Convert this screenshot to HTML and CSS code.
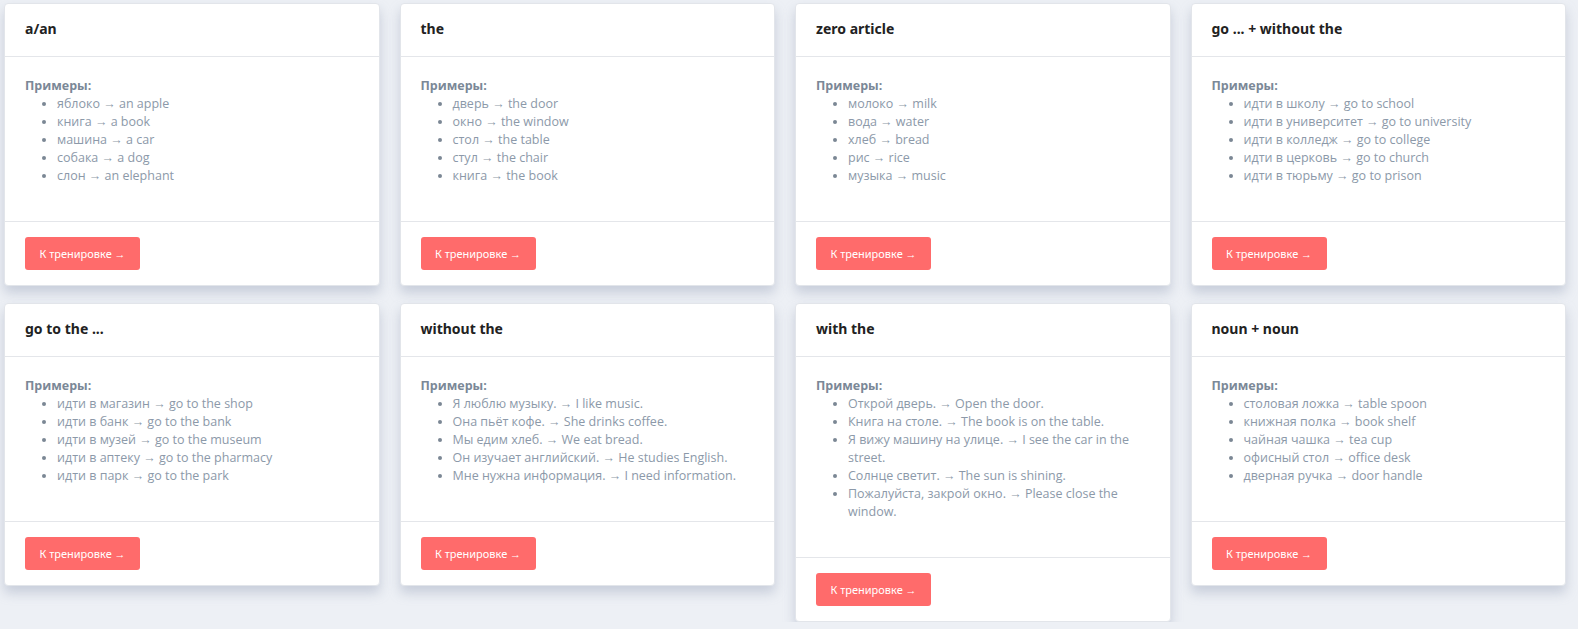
FILE: index.html
```html
<!DOCTYPE html>
<html lang="ru">
<head>
    <meta charset="UTF-8">
    <meta name="viewport" content="width=device-width, initial-scale=1.0">
    <title>Артикли</title>
    <link rel="stylesheet" href="styles.css">
</head>
<body>
    <div class="grid">
        <div class="col">
            <div class="card">
                <div class="card-header">a/an</div>
                <div class="card-body">
                    <strong>Примеры:</strong>
                    <ul>
                        <li>яблоко → an apple</li>
                        <li>книга → a book</li>
                        <li>машина → a car</li>
                        <li>собака → a dog</li>
                        <li>слон → an elephant</li>
                    </ul>
                </div>
                <div class="card-footer"><a href="#" class="btn">К тренировке →</a></div>
            </div>
            <div class="card">
                <div class="card-header">go to the ...</div>
                <div class="card-body">
                    <strong>Примеры:</strong>
                    <ul>
                        <li>идти в магазин → go to the shop</li>
                        <li>идти в банк → go to the bank</li>
                        <li>идти в музей → go to the museum</li>
                        <li>идти в аптеку → go to the pharmacy</li>
                        <li>идти в парк → go to the park</li>
                    </ul>
                </div>
                <div class="card-footer"><a href="#" class="btn">К тренировке →</a></div>
            </div>
        </div>

        <div class="col">
            <div class="card">
                <div class="card-header">the</div>
                <div class="card-body">
                    <strong>Примеры:</strong>
                    <ul>
                        <li>дверь → the door</li>
                        <li>окно → the window</li>
                        <li>стол → the table</li>
                        <li>стул → the chair</li>
                        <li>книга → the book</li>
                    </ul>
                </div>
                <div class="card-footer"><a href="#" class="btn">К тренировке →</a></div>
            </div>
            <div class="card">
                <div class="card-header">without the</div>
                <div class="card-body">
                    <strong>Примеры:</strong>
                    <ul>
                        <li>Я люблю музыку. → I like music.</li>
                        <li>Она пьёт кофе. → She drinks coffee.</li>
                        <li>Мы едим хлеб. → We eat bread.</li>
                        <li>Он изучает английский. → He studies English.</li>
                        <li>Мне нужна информация. → I need information.</li>
                    </ul>
                </div>
                <div class="card-footer"><a href="#" class="btn">К тренировке →</a></div>
            </div>
        </div>

        <div class="col">
            <div class="card">
                <div class="card-header">zero article</div>
                <div class="card-body">
                    <strong>Примеры:</strong>
                    <ul>
                        <li>молоко → milk</li>
                        <li>вода → water</li>
                        <li>хлеб → bread</li>
                        <li>рис → rice</li>
                        <li>музыка → music</li>
                    </ul>
                </div>
                <div class="card-footer"><a href="#" class="btn">К тренировке →</a></div>
            </div>
            <div class="card">
                <div class="card-header">with the</div>
                <div class="card-body">
                    <strong>Примеры:</strong>
                    <ul>
                        <li>Открой дверь. → Open the door.</li>
                        <li>Книга на столе. → The book is on the table.</li>
                        <li>Я вижу машину на улице. → I see the car in the street.</li>
                        <li>Солнце светит. → The sun is shining.</li>
                        <li>Пожалуйста, закрой окно. → Please close the window.</li>
                    </ul>
                </div>
                <div class="card-footer"><a href="#" class="btn">К тренировке →</a></div>
            </div>
        </div>

        <div class="col">
            <div class="card">
                <div class="card-header">go ... + without the</div>
                <div class="card-body">
                    <strong>Примеры:</strong>
                    <ul>
                        <li>идти в школу → go to school</li>
                        <li>идти в университет → go to university</li>
                        <li>идти в колледж → go to college</li>
                        <li>идти в церковь → go to church</li>
                        <li>идти в тюрьму → go to prison</li>
                    </ul>
                </div>
                <div class="card-footer"><a href="#" class="btn">К тренировке →</a></div>
            </div>
            <div class="card">
                <div class="card-header">noun + noun</div>
                <div class="card-body">
                    <strong>Примеры:</strong>
                    <ul>
                        <li>столовая ложка → table spoon</li>
                        <li>книжная полка → book shelf</li>
                        <li>чайная чашка → tea cup</li>
                        <li>офисный стол → office desk</li>
                        <li>дверная ручка → door handle</li>
                    </ul>
                </div>
                <div class="card-footer"><a href="#" class="btn">К тренировке →</a></div>
            </div>
        </div>
    </div>
</body>
</html>
```

FILE: styles.css
```css
body {
    margin: 0;
    background-color: #edf0f5;
    font-family: 'Open Sans', 'Noto Sans', sans-serif;
}

.grid {
    display: grid;
    grid-template-columns: repeat(4, 1fr);
    column-gap: 20px;
    padding: 3px 0 0 4px;
    width: 1562px;
    align-items: start;
}

.col {
    display: flex;
    flex-direction: column;
    gap: 17px;
}

.card {
    background: #fff;
    border: 1px solid #e2e5ea;
    border-radius: 4px;
    box-shadow: 0 7px 12px rgba(145, 155, 180, 0.4);
}

.card-header {
    height: 52px;
    line-height: 50px;
    padding: 0 20px;
    border-bottom: 1px solid #e4e6ea;
    font-family: 'Noto Sans', sans-serif;
    font-weight: bold;
    font-size: 14px;
    color: #222;
}

.card-body {
    padding: 20px;
    font-size: 12.5px;
    line-height: 18px;
    color: #8c99a9;
}

.card-body strong {
    display: block;
    color: #7b8897;
}

.card-body ul {
    margin: 0 0 16px;
    padding-left: 32px;
}

.card-body li::marker {
    color: #7b8794;
}

.card-footer {
    padding: 15px 20px;
    border-top: 1px solid #e4e6ea;
}

.btn {
    display: inline-block;
    width: 115px;
    height: 33px;
    line-height: 33px;
    text-align: center;
    background: #ff6b6b;
    color: #fff;
    font-family: 'Noto Sans', sans-serif;
    font-size: 11px;
    text-decoration: none;
    border-radius: 3px;
    vertical-align: top;
}
```
